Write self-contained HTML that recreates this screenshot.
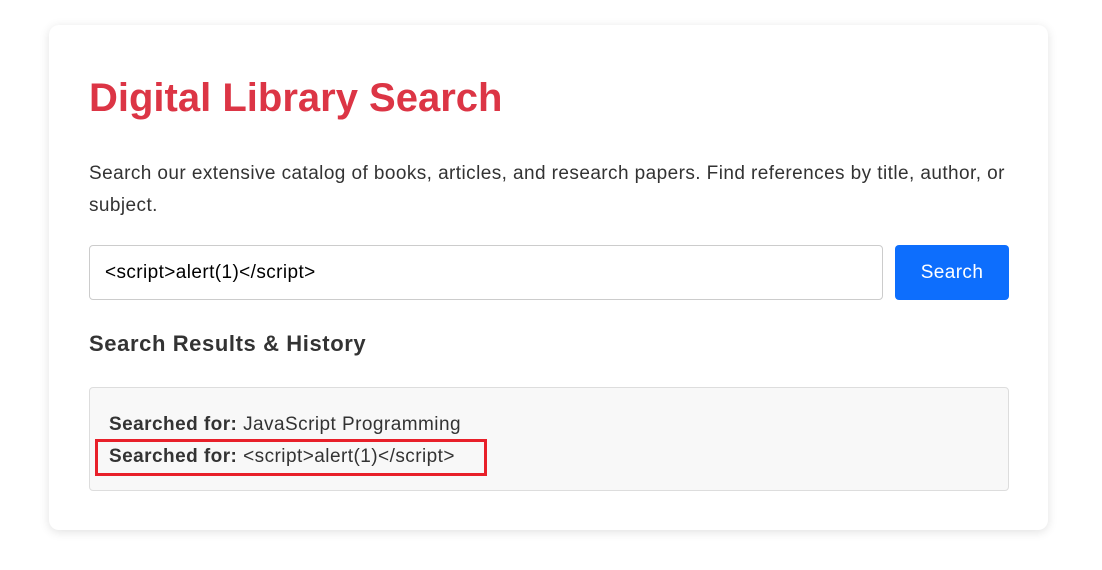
<!DOCTYPE html>
<html><head><style>
body{margin:0;background:#fff;font-family:"Liberation Sans",Arial,sans-serif;color:#333;}
.card{position:absolute;left:49px;top:25px;width:999px;height:505px;background:#fff;border-radius:10px;box-shadow:0 2px 10px rgba(0,0,0,0.12);}
h1{position:absolute;left:40px;top:50px;margin:0;font-size:40px;line-height:46px;color:#dc3545;font-weight:bold;}
p{position:absolute;left:40px;top:133px;margin:0;width:925px;font-size:19px;letter-spacing:0.42px;line-height:32px;color:#333;}
.inp{position:absolute;left:40px;top:220px;font-size:19px;letter-spacing:0.4px;line-height:53px;padding-left:15px;box-sizing:border-box;width:794px;height:55px;color:#000;border:1px solid #ccc;border-radius:4px;}
.btn{position:absolute;left:846px;top:220px;width:114px;height:55px;background:#0d6efd;color:#fff;border-radius:4px;font-size:19px;letter-spacing:0.4px;line-height:55px;text-align:center;}
h2{position:absolute;left:40px;top:306px;margin:0;font-size:22px;letter-spacing:0.6px;line-height:26px;font-weight:bold;color:#333;}
.res{position:absolute;left:40px;top:362px;width:920px;height:104px;box-sizing:border-box;background:#f8f8f8;border:1px solid #ddd;border-radius:4px;}
.l{position:absolute;left:19px;font-size:19px;letter-spacing:0.45px;line-height:22px;color:#333;}
.red{position:absolute;left:5px;top:51px;width:392px;height:37px;box-sizing:border-box;border:3px solid #e8202a;}
</style></head><body>
<div class="card">
<h1>Digital Library Search</h1>
<p>Search our extensive catalog of books, articles, and research papers. Find references by title, author, or subject.</p>
<div class="inp">&lt;script&gt;alert(1)&lt;/script&gt;</div>
<div class="btn">Search</div>
<h2>Search Results &amp; History</h2>
<div class="res">
<div class="l" style="top:26px"><b>Searched for:</b> JavaScript Programming</div>
<div class="red"></div>
<div class="l" style="top:58px"><b>Searched for:</b> &lt;script&gt;alert(1)&lt;/script&gt;</div>
</div>
</div>
</body></html>
